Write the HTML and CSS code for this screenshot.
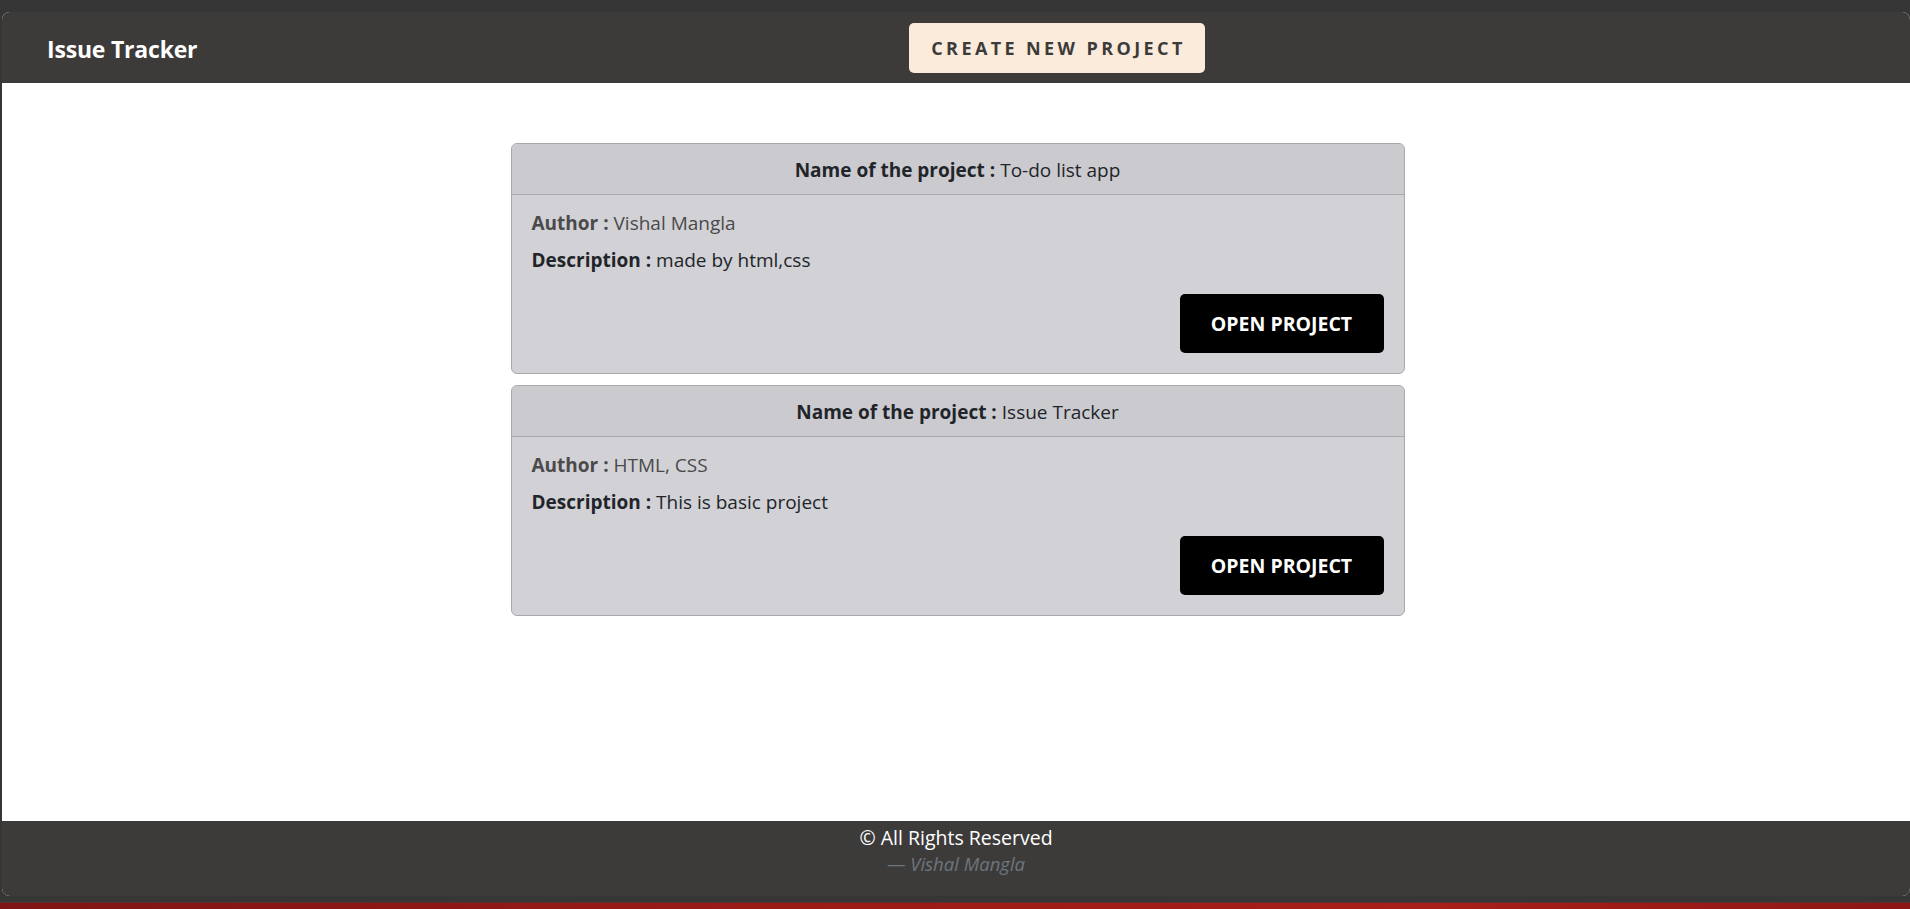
FILE: index.html
```html
<!DOCTYPE html>
<html lang="en">
<head>
<meta charset="utf-8">
<title>Issue Tracker</title>
<link rel="stylesheet" href="styles.css">
</head>
<body>
<div class="window">
  <header class="navbar">
    <div class="brand">Issue Tracker</div>
    <div class="nav-center">
      <button class="btn-create">CREATE NEW PROJECT</button>
    </div>
    <div class="nav-right"></div>
  </header>
  <main class="main">
    <div class="card">
      <div class="card-header"><b>Name of the project :</b> To-do list app</div>
      <div class="card-body">
        <p class="author"><b>Author :</b> Vishal Mangla</p>
        <p class="desc"><b>Description :</b> made by html,css</p>
        <div class="actions"><button class="btn-open">OPEN PROJECT</button></div>
      </div>
    </div>
    <div class="card">
      <div class="card-header"><b>Name of the project :</b> Issue Tracker</div>
      <div class="card-body">
        <p class="author"><b>Author :</b> HTML, CSS</p>
        <p class="desc"><b>Description :</b> This is basic project</p>
        <div class="actions"><button class="btn-open">OPEN PROJECT</button></div>
      </div>
    </div>
  </main>
  <footer class="footer">
    <div class="rights">© All Rights Reserved</div>
    <div class="signature">— <i>Vishal Mangla</i></div>
  </footer>
</div>
<div class="desktop"></div>
</body>
</html>
```
FILE: styles.css
```css
* { box-sizing: border-box; }
html, body { margin: 0; padding: 0; }
body {
  background: #363636;
  font-family: "Open Sans", "Noto Sans", sans-serif;
  width: 1910px;
  height: 909px;
  overflow: hidden;
}
.window {
  margin: 12px 0 0 2px;
  height: 884px;
  border-radius: 8px;
  overflow: hidden;
  display: flex;
  flex-direction: column;
  background: #fff;
}
.navbar {
  height: 71px;
  flex: none;
  background: #3d3b3a;
  display: flex;
  align-items: center;
  padding: 0 0 0 45px;
}
.brand {
  color: #fff;
  font-weight: 700;
  font-size: 23px;
  letter-spacing: -0.2px;
  width: 862px;
  padding-top: 2px;
}
.nav-center { flex: none; }
.btn-create {
  display: block;
  height: 50px;
  width: 296px;
  margin-top: 1px;
  background: #fbebda;
  color: #3d3b3a;
  border: none;
  border-radius: 5px;
  font-family: inherit;
  font-weight: 700;
  font-size: 18px;
  letter-spacing: 3.4px;
  padding: 0 0 0 3px;
}
.main {
  flex: 1;
  display: flex;
  flex-direction: column;
  align-items: center;
  gap: 11px;
  padding-top: 60px;
  padding-left: 3px;
}
.card {
  width: 894px;
  height: 231px;
  background: #d2d1d6;
  border: 1px solid #a9a8ac;
  border-radius: 6px;
  overflow: hidden;
  display: flex;
  flex-direction: column;
}
.card-header {
  height: 51px;
  flex: none;
  background: #cbcacf;
  border-bottom: 1px solid #a9a8ac;
  display: flex;
  align-items: center;
  justify-content: center;
  gap: 5px;
  font-size: 19px;
  color: #212529;
  padding-top: 1px;
}
.card-body {
  flex: 1;
  padding: 15px 20px 20px 20px;
  display: flex;
  flex-direction: column;
  font-size: 19px;
  color: #212529;
}
.card-body p { margin: 0; line-height: 27px; }
.author { color: #4a4a4a; }
.desc { margin-top: 10px !important; }
.actions {
  margin-top: auto;
  display: flex;
  justify-content: flex-end;
}
.btn-open {
  width: 204px;
  height: 59px;
  background: #000;
  color: #fff;
  border: none;
  border-radius: 5px;
  font-family: inherit;
  font-weight: 700;
  font-size: 19.5px;
  padding: 0;
}
.footer {
  height: 75px;
  flex: none;
  background: #3d3b3a;
  display: flex;
  flex-direction: column;
  align-items: center;
  padding-top: 3px;
}
.rights {
  color: #fff;
  font-size: 19.5px;
  line-height: 27px;
}
.signature {
  color: #6c757d;
  font-size: 18.5px;
  line-height: 25px;
  margin-top: 0;
}
.desktop {
  margin-top: 6px;
  height: 7px;
  border-top: 1px solid #5a3030;
  background: linear-gradient(90deg, #7e1414 0%, #9a1a16 40%, #a81e18 75%, #8c1614 100%);
}
```
